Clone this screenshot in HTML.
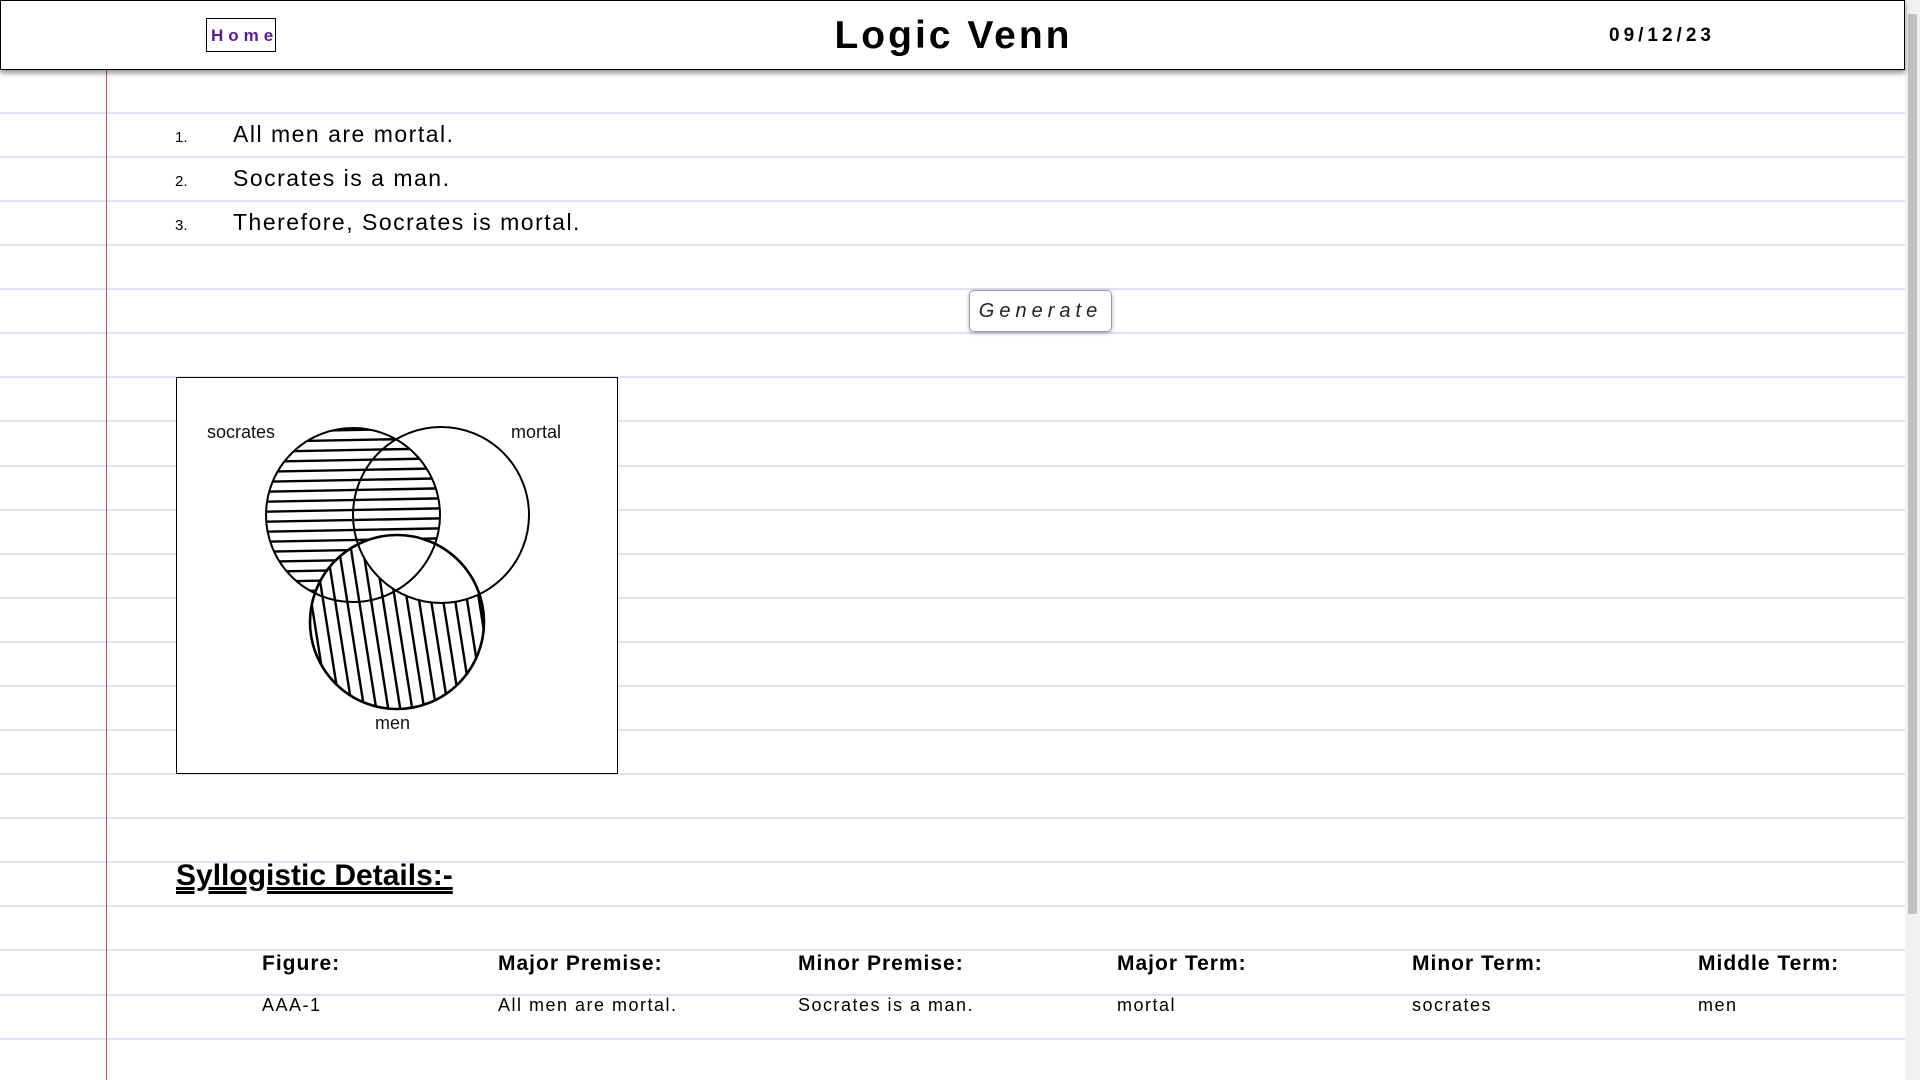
<!DOCTYPE html>
<html><head><meta charset="utf-8"><style>
html,body{margin:0;padding:0;width:1920px;height:1080px;overflow:hidden;background:#fff;font-family:"Liberation Sans","DejaVu Sans",sans-serif;}
.ln{position:absolute;left:0;width:1905px;height:2px;background:#dde3f6;}
.margin{position:absolute;left:106px;top:70px;width:1px;height:1010px;background:#e0474c;z-index:1;}
.hdr{position:absolute;left:0;top:0;width:1903px;height:68px;border:1px solid #000;background:#fff;box-shadow:0 3px 5px rgba(0,0,0,.45);z-index:2;}
.home{position:absolute;left:205px;top:17px;width:70px;height:34px;border:1px solid #000;box-sizing:border-box;color:#5a1a9a;font-weight:bold;font-size:17px;letter-spacing:5px;text-align:center;line-height:34px;padding-left:4px;}
.title{position:absolute;left:0;width:1905px;top:13px;text-align:center;font-size:39px;font-weight:bold;letter-spacing:3px;}
.date{position:absolute;left:1608px;top:24px;font-size:19px;font-weight:bold;letter-spacing:4px;}
.sb{position:absolute;left:1905px;top:0;width:15px;height:1080px;background:#f1f1f1;}
.sb div{position:absolute;left:3px;top:14px;width:9px;height:900px;background:#c1c1c1;}
.li{position:absolute;font-size:23px;letter-spacing:1.5px;}
.num{position:absolute;font-size:15px;}
.btn{position:absolute;left:969px;top:290px;width:143px;height:42px;border:1px solid #999;border-radius:5px;box-sizing:border-box;background:#fff;box-shadow:0 1px 4px rgba(0,0,0,.3);font-style:italic;font-size:20px;letter-spacing:5px;text-align:center;line-height:40px;color:#222;}
.venn{position:absolute;left:176px;top:377px;width:442px;height:397px;border:1px solid #000;box-sizing:border-box;background:#fff;}
.h2{position:absolute;left:176px;top:859px;font-size:30px;font-weight:bold;text-decoration:underline double;}
.th{position:absolute;top:952px;font-size:21px;font-weight:bold;letter-spacing:1px;}
.td{position:absolute;top:995px;font-size:18px;letter-spacing:1.5px;}
</style></head><body>
<div class="ln" style="top:112px"></div><div class="ln" style="top:156px"></div><div class="ln" style="top:200px"></div><div class="ln" style="top:244px"></div><div class="ln" style="top:288px"></div><div class="ln" style="top:332px"></div><div class="ln" style="top:376px"></div><div class="ln" style="top:420px"></div><div class="ln" style="top:465px"></div><div class="ln" style="top:509px"></div><div class="ln" style="top:553px"></div><div class="ln" style="top:597px"></div><div class="ln" style="top:641px"></div><div class="ln" style="top:685px"></div><div class="ln" style="top:729px"></div><div class="ln" style="top:773px"></div><div class="ln" style="top:817px"></div><div class="ln" style="top:861px"></div><div class="ln" style="top:905px"></div><div class="ln" style="top:949px"></div><div class="ln" style="top:994px"></div><div class="ln" style="top:1038px"></div>
<div class="margin"></div>
<div class="hdr">
<div class="home">Home</div>
<div class="title">Logic Venn</div>
<div class="date">09/12/23</div>
</div>
<div class="sb"><div></div></div>
<span class="num" style="left:175px;top:129px">1.</span><span class="li" style="left:233px;top:121px">All men are mortal.</span>
<span class="num" style="left:175px;top:173px">2.</span><span class="li" style="left:233px;top:165px">Socrates is a man.</span>
<span class="num" style="left:175px;top:217px">3.</span><span class="li" style="left:233px;top:209px">Therefore, Socrates is mortal.</span>
<div class="btn">Generate</div>
<div class="venn">
<svg width="442" height="397" viewBox="176 377 442 397" style="position:absolute;left:-1px;top:-1px">
<defs>
<clipPath id="cs"><circle cx="353" cy="515" r="87"/></clipPath>
<clipPath id="cm"><circle cx="397" cy="622" r="87"/></clipPath>
<mask id="notmen"><rect x="176" y="377" width="442" height="397" fill="#fff"/><circle cx="397" cy="622" r="87" fill="#000"/></mask>
<mask id="notmortal"><rect x="176" y="377" width="442" height="397" fill="#fff"/><circle cx="441" cy="515" r="88" fill="#000"/></mask>
</defs>
<g clip-path="url(#cs)" mask="url(#notmen)" stroke="#000" stroke-width="2.4">
<path d="M250 432L460 428M250 442L460 438M250 452L460 448M250 462L460 458M250 472L460 468M250 482L460 478M250 492L460 488M250 502L460 498M250 512L460 508M250 522L460 518M250 532L460 528M250 542L460 538M250 552L460 548M250 562L460 558M250 572L460 568M250 582L460 578M250 592L460 588M250 602L460 598"/>
</g>
<g clip-path="url(#cm)" mask="url(#notmortal)" stroke="#000" stroke-width="2.4">
<path d="M300 530L330 720M312 530L342 720M324 530L354 720M336 530L366 720M348 530L378 720M360 530L390 720M372 530L402 720M384 530L414 720M396 530L426 720M408 530L438 720M420 530L450 720M432 530L462 720M444 530L474 720M456 530L486 720M468 530L498 720M480 530L510 720M492 530L522 720"/>
</g>
<g fill="none" stroke="#000" stroke-width="2">
<circle cx="353" cy="515" r="87"/><circle cx="441" cy="515" r="88"/><circle cx="397" cy="622" r="87" stroke-width="2.6"/>
</g>
<g font-family="Liberation Sans,sans-serif" font-size="18" fill="#111">
<text x="207" y="438">socrates</text><text x="511" y="438">mortal</text><text x="375" y="729">men</text>
</g>
</svg>
</div>
<div class="h2">Syllogistic Details:-</div>
<div class="th" style="left:262px">Figure:</div>
<div class="th" style="left:498px">Major Premise:</div>
<div class="th" style="left:798px">Minor Premise:</div>
<div class="th" style="left:1117px">Major Term:</div>
<div class="th" style="left:1412px">Minor Term:</div>
<div class="th" style="left:1698px">Middle Term:</div>
<div class="td" style="left:262px">AAA-1</div>
<div class="td" style="left:498px">All men are mortal.</div>
<div class="td" style="left:798px">Socrates is a man.</div>
<div class="td" style="left:1117px">mortal</div>
<div class="td" style="left:1412px">socrates</div>
<div class="td" style="left:1698px">men</div>
</body></html>
